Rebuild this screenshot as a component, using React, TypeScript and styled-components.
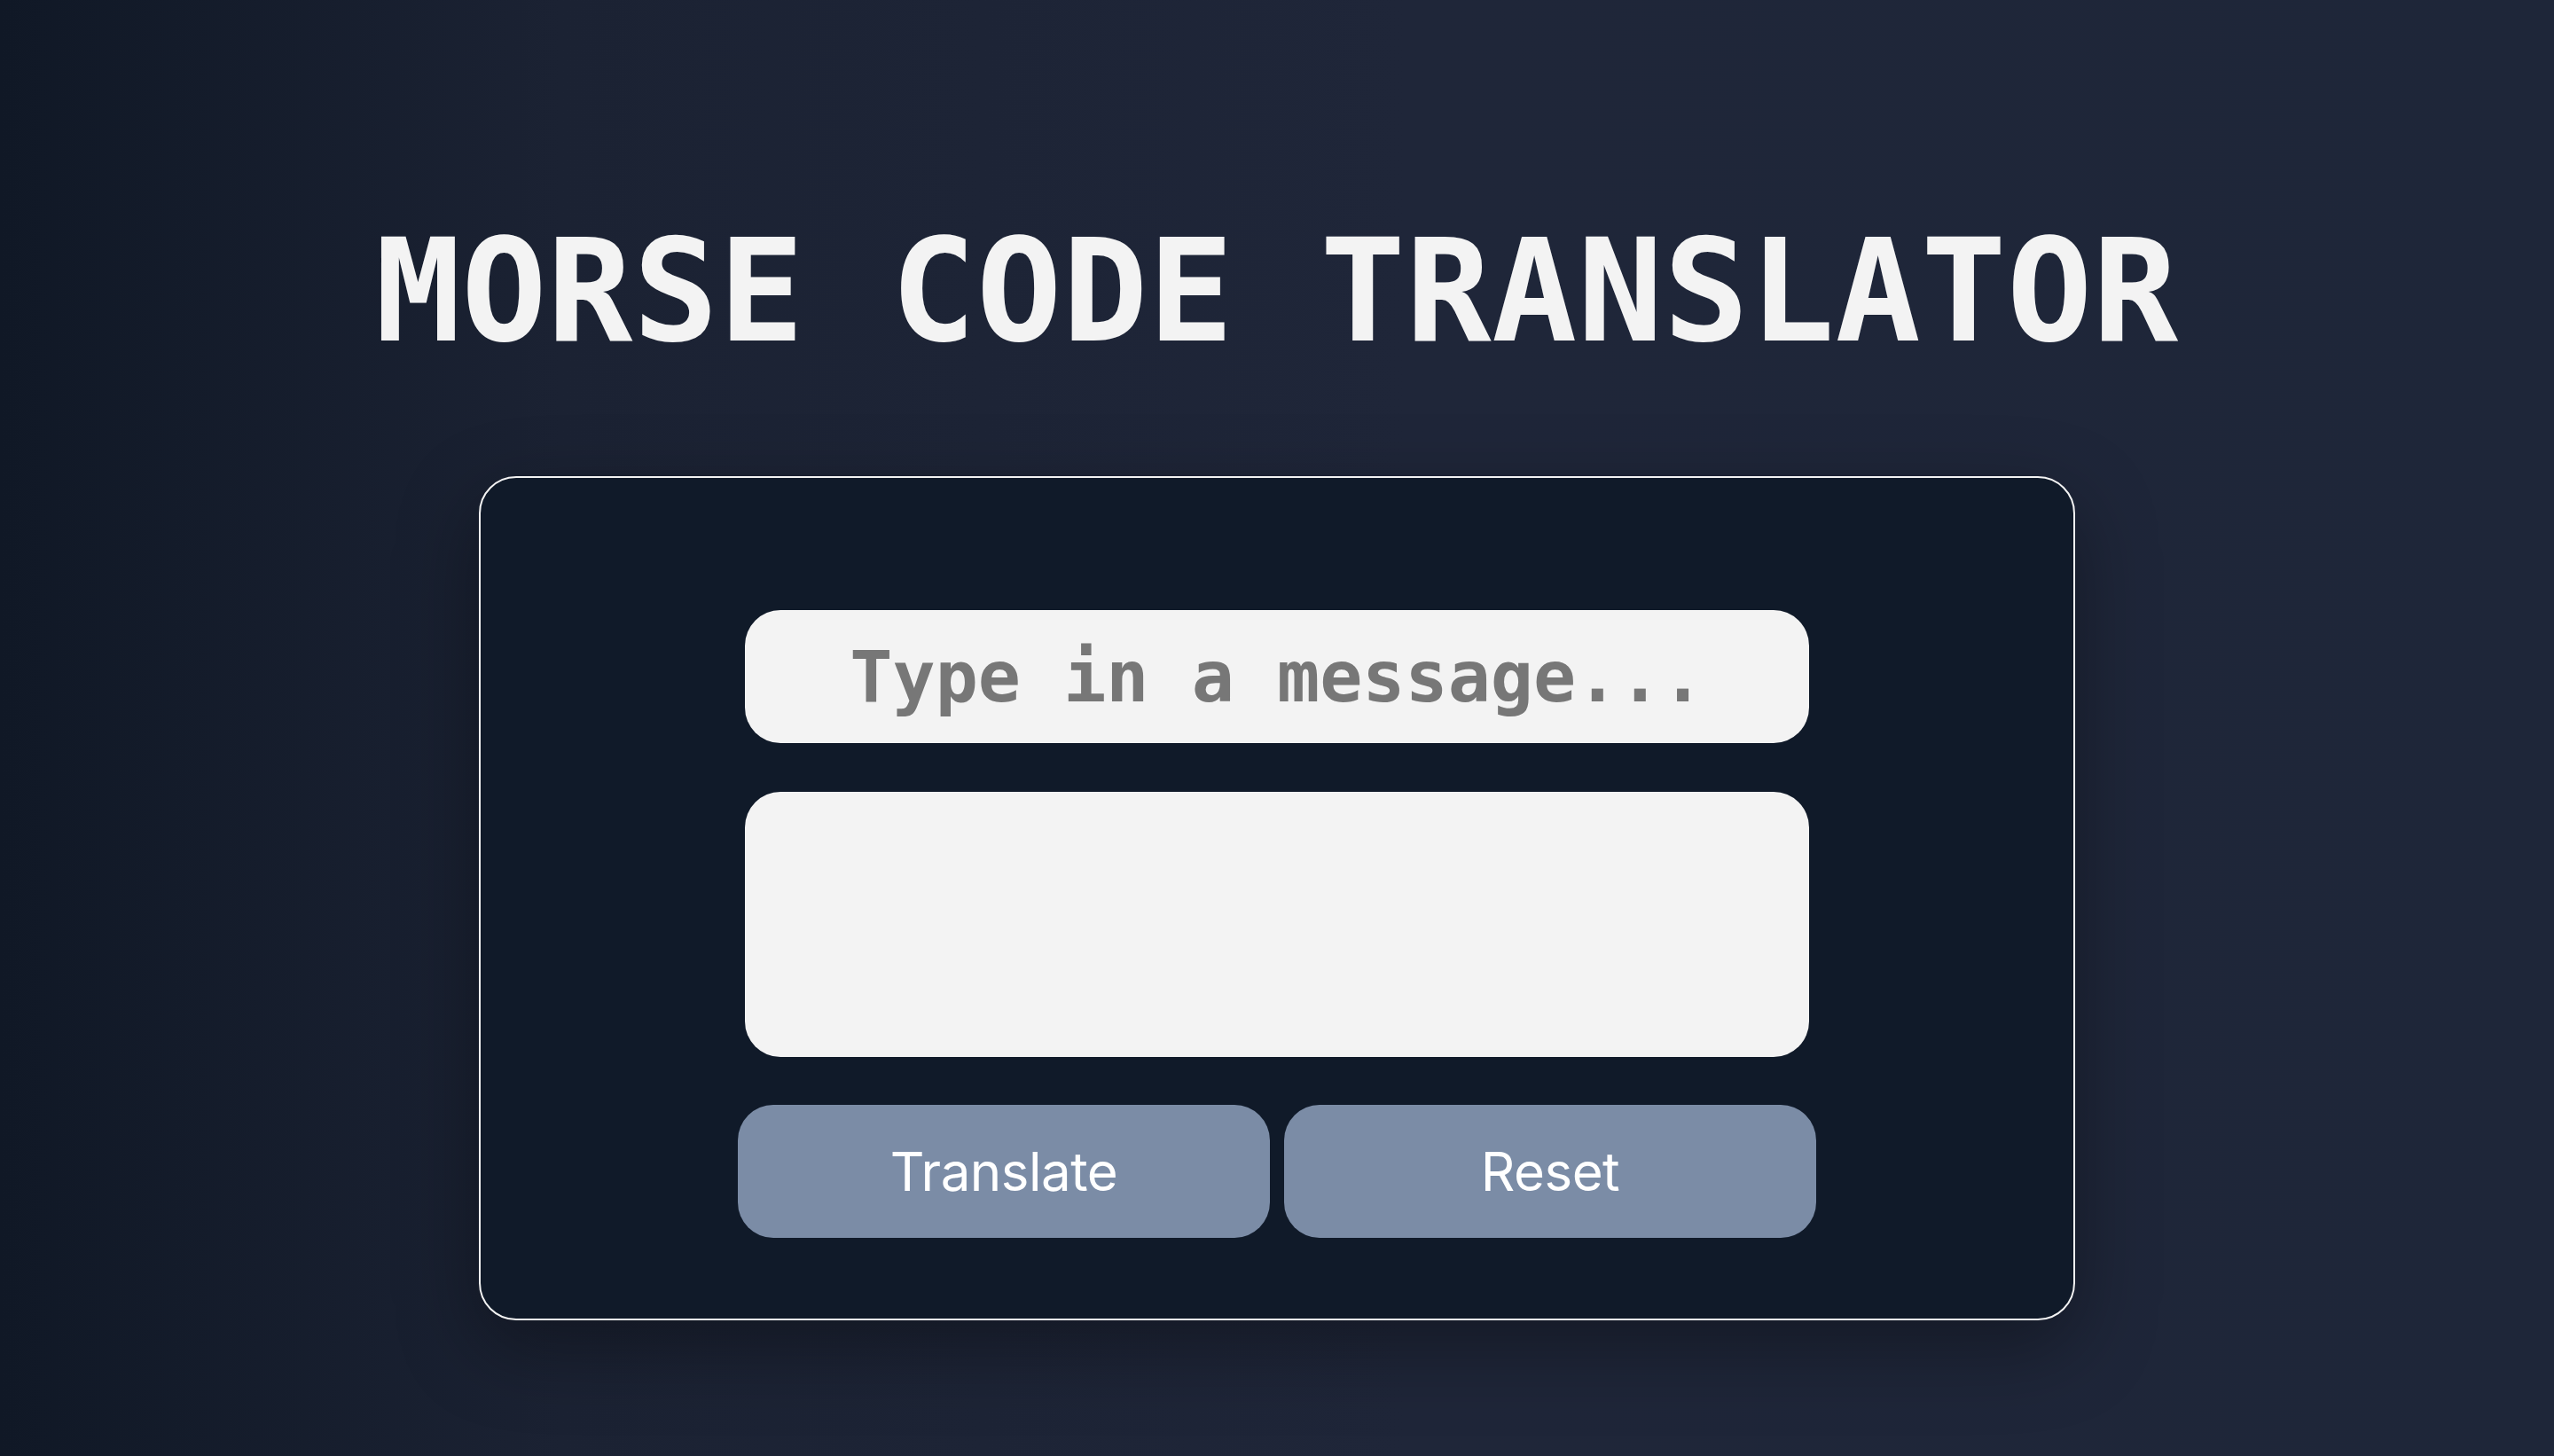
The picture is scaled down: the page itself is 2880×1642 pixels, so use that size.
import React, { useState } from "react";
import styled, { createGlobalStyle } from "styled-components";

const GlobalStyle = createGlobalStyle`
  html, body {
    margin: 0;
    padding: 0;
  }
  body {
    background: linear-gradient(90deg, #101826 0%, #1b2233 22%, #1f2639 55%, #1e2639 100%);
    min-height: 100vh;
    font-family: "Inter", "Liberation Sans", sans-serif;
  }
  * { box-sizing: border-box; }
`;

const Page = styled.main`
  min-height: 100vh;
  display: flex;
  flex-direction: column;
  align-items: center;
  padding-top: 249px;
`;

const Title = styled.h1`
  margin: 0;
  font-family: "DejaVu Sans Mono", "Liberation Mono", monospace;
  font-weight: 700;
  font-size: 160px;
  line-height: 1;
  height: 160px;
  color: #f3f3f3;
  letter-spacing: 0.5px;
  white-space: nowrap;
`;

const Card = styled.section`
  margin-top: 128px;
  width: 1800px;
  height: 952px;
  background: #101a29;
  border: 2px solid #f3f3f3;
  border-radius: 42px;
  box-shadow: 0 30px 90px rgba(0, 0, 0, 0.35);
  display: flex;
  flex-direction: column;
  align-items: center;
  padding-top: 149px;
`;

const MessageInput = styled.input`
  width: 1200px;
  height: 150px;
  border: none;
  outline: none;
  border-radius: 40px;
  background: #f3f3f3;
  text-align: center;
  font-family: "DejaVu Sans Mono", "Liberation Mono", monospace;
  font-weight: 700;
  font-size: 80px;
  color: #333;
  padding: 0 20px;
  &::placeholder {
    color: #777777;
    opacity: 1;
  }
`;

const Output = styled.textarea`
  margin-top: 55px;
  width: 1200px;
  height: 299px;
  border: none;
  outline: none;
  resize: none;
  border-radius: 40px;
  background: #f3f3f3;
  font-family: "DejaVu Sans Mono", "Liberation Mono", monospace;
  font-size: 48px;
  padding: 30px 40px;
  color: #333;
`;

const ButtonRow = styled.div`
  margin-top: 54px;
  display: flex;
  gap: 16px;
`;

const ActionButton = styled.button`
  width: 600px;
  height: 150px;
  border: none;
  border-radius: 40px;
  background: #7b8ca6;
  color: #ffffff;
  font-family: "Inter", "Liberation Sans", sans-serif;
  font-size: 60px;
  font-weight: 400;
  letter-spacing: -0.5px;
  cursor: pointer;
`;

export default function App() {
  const [text, setText] = useState("");
  const [out, setOut] = useState("");
  return (
    <>
      <GlobalStyle />
      <Page>
        <Title>MORSE CODE TRANSLATOR</Title>
        <Card>
          <MessageInput
            value={text}
            onChange={(e) => setText(e.target.value)}
            placeholder="Type in a message..."
          />
          <Output value={out} readOnly />
          <ButtonRow>
            <ActionButton onClick={() => setOut(text)}>Translate</ActionButton>
            <ActionButton
              onClick={() => {
                setText("");
                setOut("");
              }}
            >
              Reset
            </ActionButton>
          </ButtonRow>
        </Card>
      </Page>
    </>
  );
}
